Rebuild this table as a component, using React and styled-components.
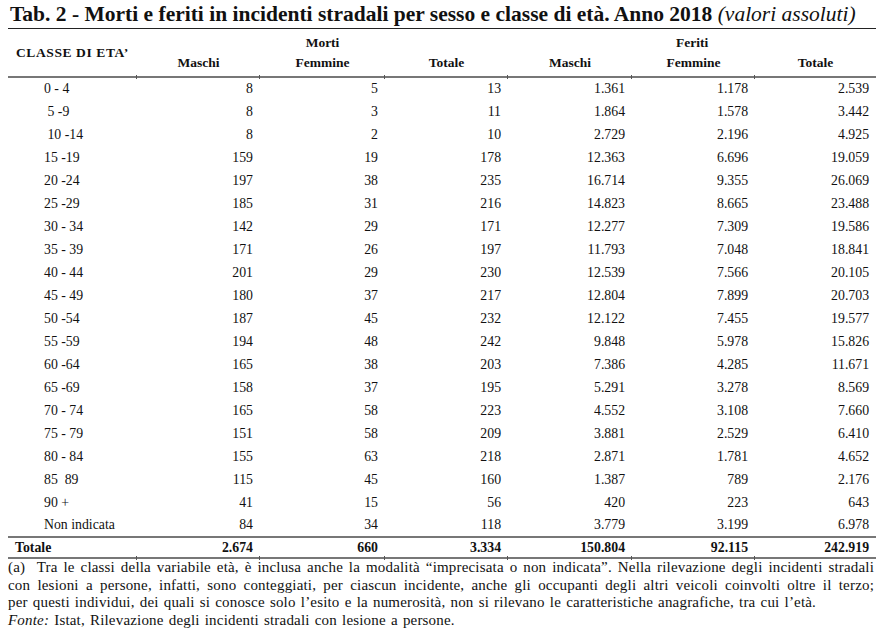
import React from 'react'
import styled, { css, createGlobalStyle } from 'styled-components'

const serif = '"Liberation Serif", "Times New Roman", Times, serif'

const GlobalStyle = createGlobalStyle`
  body {
    margin: 0;
    background: #fff;
    color: #111;
    font-family: ${serif};
  }
  table, th, td {
    font-family: ${serif};
  }
`

// little marks where the column borders cross a rule
const tick = css`
  position: relative;
  &::after {
    content: '';
    position: absolute;
    left: -1px;
    bottom: -3px;
    width: 1px;
    height: 4px;
    background: #555;
  }
`

const Page = styled.div`
  width: 886px;
  padding: 0 10px 0 8px;
  box-sizing: border-box;
  font-family: ${serif};
`

const Title = styled.h1`
  margin: 0;
  padding-left: 2px;
  font-family: ${serif};
  font-size: 21.5px;
  font-weight: bold;
  line-height: 28px;
  white-space: nowrap;
  border-bottom: 1.5px solid #222;

  em {
    font-weight: normal;
    font-style: italic;
  }
`

const Table = styled.table`
  width: 868px;
  border-collapse: collapse;
  table-layout: fixed;
  font-family: ${serif};
  font-size: 13.8px;
  color: #111;
`

const GroupCell = styled.th`
  height: 22px;
  padding: 0;
  font-size: 13.5px;
  font-weight: bold;
  text-align: center;
  vertical-align: bottom;
`

const LabelHead = styled.th`
  padding: 0 0 0 8px;
  font-size: 13.5px;
  font-weight: bold;
  letter-spacing: 0.6px;
  text-align: left;
  vertical-align: middle;
  border-bottom: 2px solid #777;
`

const ColHead = styled.th`
  ${tick}
  height: 23px;
  padding: 0 0 2px;
  font-size: 13.5px;
  font-weight: bold;
  text-align: center;
  vertical-align: middle;
  border-bottom: 2px solid #777;
`

const Row = styled.tr`
  height: ${(p) => (p.$total ? '21px' : '23px')};
  font-weight: ${(p) => (p.$total ? 'bold' : 'normal')};

  td {
    border-top: ${(p) => (p.$total ? '2px solid #777' : 'none')};
    border-bottom: ${(p) => (p.$total ? '2px solid #777' : 'none')};
  }
`

const Label = styled.td`
  padding: 0 0 0 ${(p) => (p.$total ? '7px' : '36px')};
  text-align: left;
  white-space: pre;
`

const Num = styled.td`
  padding: 0 7px 0 0;
  text-align: right;
  ${(p) => p.$total && tick}
`

const Notes = styled.div`
  padding-right: 2px;
  font-family: ${serif};
  font-size: 15px;
  line-height: 17.6px;
  letter-spacing: 0.18px;
  word-spacing: 1.2px;
  color: #111;

  em {
    font-style: italic;
  }
`

const NoteLine = styled.div`
  white-space: nowrap;
  text-align: left;
  text-align-last: ${(p) => (p.$justify ? 'justify' : 'left')};
`

const rows = [
  ['0 - 4', 8, 5, 13, '1.361', '1.178', '2.539'],
  [' 5 -9', 8, 3, 11, '1.864', '1.578', '3.442'],
  [' 10 -14', 8, 2, 10, '2.729', '2.196', '4.925'],
  ['15 -19', 159, 19, 178, '12.363', '6.696', '19.059'],
  ['20 -24', 197, 38, 235, '16.714', '9.355', '26.069'],
  ['25 -29', 185, 31, 216, '14.823', '8.665', '23.488'],
  ['30 - 34', 142, 29, 171, '12.277', '7.309', '19.586'],
  ['35 - 39', 171, 26, 197, '11.793', '7.048', '18.841'],
  ['40 - 44', 201, 29, 230, '12.539', '7.566', '20.105'],
  ['45 - 49', 180, 37, 217, '12.804', '7.899', '20.703'],
  ['50 -54', 187, 45, 232, '12.122', '7.455', '19.577'],
  ['55 -59', 194, 48, 242, '9.848', '5.978', '15.826'],
  ['60 -64', 165, 38, 203, '7.386', '4.285', '11.671'],
  ['65 -69', 158, 37, 195, '5.291', '3.278', '8.569'],
  ['70 - 74', 165, 58, 223, '4.552', '3.108', '7.660'],
  ['75 - 79', 151, 58, 209, '3.881', '2.529', '6.410'],
  ['80 - 84', 155, 63, 218, '2.871', '1.781', '4.652'],
  ['85  89', 115, 45, 160, '1.387', '789', '2.176'],
  ['90 +', 41, 15, 56, '420', '223', '643'],
  ['Non indicata', 84, 34, 118, '3.779', '3.199', '6.978'],
]

const totals = ['Totale', '2.674', '660', '3.334', '150.804', '92.115', '242.919']

export default function App() {
  return (
    <Page>
      <GlobalStyle />
      <Title>
        Tab. 2 - Morti e feriti in incidenti stradali per sesso e classe di età. Anno 2018 <em>(valori assoluti)</em>
      </Title>
      <Table>
        <colgroup>
          <col style={{ width: 129 }} />
          <col style={{ width: 123 }} />
          <col style={{ width: 125 }} />
          <col style={{ width: 123 }} />
          <col style={{ width: 124 }} />
          <col style={{ width: 123 }} />
          <col style={{ width: 121 }} />
        </colgroup>
        <thead>
          <tr>
            <LabelHead rowSpan={2}>CLASSE DI ETA’</LabelHead>
            <GroupCell colSpan={3}>Morti</GroupCell>
            <GroupCell colSpan={3}>Feriti</GroupCell>
          </tr>
          <tr>
            <ColHead>Maschi</ColHead>
            <ColHead>Femmine</ColHead>
            <ColHead>Totale</ColHead>
            <ColHead>Maschi</ColHead>
            <ColHead>Femmine</ColHead>
            <ColHead>Totale</ColHead>
          </tr>
        </thead>
        <tbody>
          {rows.map((r) => (
            <Row key={r[0]}>
              <Label>{r[0]}</Label>
              {r.slice(1).map((v, i) => (
                <Num key={i}>{v}</Num>
              ))}
            </Row>
          ))}
          <Row $total>
            <Label $total>{totals[0]}</Label>
            {totals.slice(1).map((v, i) => (
              <Num key={i} $total>{v}</Num>
            ))}
          </Row>
        </tbody>
      </Table>
      <Notes>
        <NoteLine $justify>
          (a)&nbsp; Tra le classi della variabile età, è inclusa anche la modalità “imprecisata o non indicata”. Nella rilevazione degli incidenti stradali
        </NoteLine>
        <NoteLine $justify>
          con lesioni a persone, infatti, sono conteggiati, per ciascun incidente, anche gli occupanti degli altri veicoli coinvolti oltre il terzo;
        </NoteLine>
        <NoteLine>
          per questi individui, dei quali si conosce solo l’esito e la numerosità, non si rilevano le caratteristiche anagrafiche, tra cui l’età.
        </NoteLine>
        <NoteLine>
          <em>Fonte:</em> Istat, Rilevazione degli incidenti stradali con lesione a persone.
        </NoteLine>
      </Notes>
    </Page>
  )
}
